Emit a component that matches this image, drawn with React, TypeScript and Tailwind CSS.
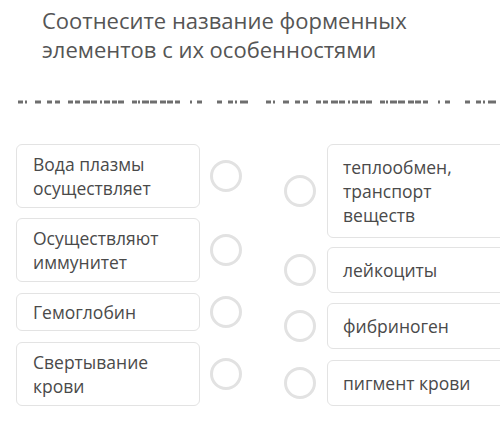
import React from "react";

const dashes: [number, number][] = [
  [18, 5], [25, 2], [35, 6], [47, 5], [55, 5], [68, 5], [75, 5], [83, 7], [91, 6], [100, 2],
  [104, 6], [112, 5], [118, 6], [132, 5], [138, 2], [142, 7], [150, 7], [160, 6], [167, 6],
  [175, 5], [190, 2], [197, 5], [217, 5], [228, 5], [235, 2], [240, 8],
];

function DashLine() {
  return (
    <svg width="500" height="6" viewBox="0 0 500 6" className="block">
      {dashes.map(([x, w], i) => (
        <rect key={"a" + i} x={x} y={1.5} width={w} height={3} fill="#555" opacity={0.85} />
      ))}
      {dashes.map(([x, w], i) => (
        <rect key={"b" + i} x={x + 248} y={1.5} width={w} height={3} fill="#555" opacity={0.85} />
      ))}
    </svg>
  );
}

function Circle() {
  return <div className="w-[32px] h-[32px] rounded-full border-[3px] border-[#e2e2e2] shrink-0" />;
}

const leftItems = [
  { text: ["Вода плазмы", "осуществляет"], pad: "py-[7px]", mt: "" },
  { text: ["Осуществляют", "иммунитет"], pad: "py-[7px]", mt: "mt-[10px]" },
  { text: ["Гемоглобин"], pad: "py-[6px]", mt: "mt-[11px]" },
  { text: ["Свертывание", "крови"], pad: "py-[7px]", mt: "mt-[11px]" },
];

const rightItems = [
  { text: ["теплообмен,", "транспорт", "веществ"], pad: "py-[10px]", mt: "" },
  { text: ["лейкоциты"], pad: "py-[10px]", mt: "mt-[9px]" },
  { text: ["фибриноген"], pad: "py-[10px]", mt: "mt-[10px]" },
  { text: ["пигмент крови"], pad: "py-[10px]", mt: "mt-[11px]" },
];

export default function App() {
  return (
    <div
      className="w-[500px] h-[447px] bg-white overflow-hidden relative"
      style={{ fontFamily: '"Open Sans", "Noto Sans", sans-serif' }}
    >
      <div className="pl-[42px] pt-[6px] text-[22px] leading-[29px] text-[#555555]">
        <div>Соотнесите название форменных</div>
        <div>элементов с их особенностями</div>
      </div>
      <div className="mt-[35px]">
        <DashLine />
      </div>
      <div className="flex mt-[39px]">
        <div className="flex flex-col pl-[16px] w-[268px] shrink-0">
          {leftItems.map((it, i) => (
            <div key={i} className={"flex items-center gap-[10px] " + it.mt}>
              <div
                className={
                  "w-[184px] shrink-0 border border-[#e3e3e3] rounded-[6px] px-[16px] text-[17.5px] leading-[24px] text-[#4a4a4a] " +
                  it.pad
                }
              >
                {it.text.map((t, j) => (
                  <div key={j}>{t}</div>
                ))}
              </div>
              <Circle />
            </div>
          ))}
        </div>
        <div className="flex flex-col pl-[16px] shrink-0">
          {rightItems.map((it, i) => (
            <div key={i} className={"flex items-center gap-[11px] " + it.mt}>
              <Circle />
              <div
                className={
                  "w-[200px] shrink-0 border border-[#e3e3e3] rounded-[6px] px-[15px] text-[17.5px] leading-[24px] text-[#4a4a4a] " +
                  it.pad
                }
              >
                {it.text.map((t, j) => (
                  <div key={j}>{t}</div>
                ))}
              </div>
            </div>
          ))}
        </div>
      </div>
    </div>
  );
}
